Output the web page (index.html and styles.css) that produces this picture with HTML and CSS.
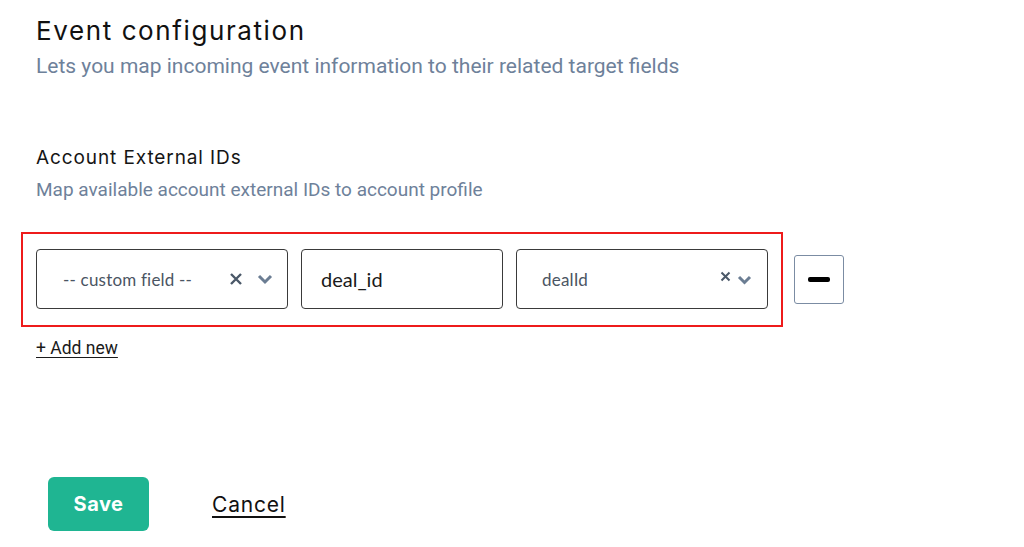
FILE: index.html
```html
<!DOCTYPE html>
<html>
<head>
<meta charset="utf-8">
<link rel="stylesheet" href="styles.css">
</head>
<body>
<div class="page">
  <h1 class="title">Event configuration</h1>
  <p class="subtitle">Lets you map incoming event information to their related target fields</p>

  <h2 class="section-title">Account External IDs</h2>
  <p class="section-sub">Map available account external IDs to account profile</p>

  <div class="mapping">
    <div class="highlight">
      <div class="field select">
        <span class="placeholder">-- custom field --</span>
        <span class="icons">
          <svg class="x" width="14" height="14" viewBox="0 0 14 14"><path d="M2 2L12 12M12 2L2 12" stroke="#4a5868" stroke-width="2.4" stroke-linecap="butt"/></svg>
          <svg class="chev" width="16" height="12" viewBox="0 0 16 12"><path d="M2 3L8 9L14 3" fill="none" stroke="#6b7d93" stroke-width="3"/></svg>
        </span>
      </div>
      <div class="field text">deal_id</div>
      <div class="field select narrow">
        <span class="placeholder">dealId</span>
        <span class="icons tight">
          <svg class="x small" width="11" height="11" viewBox="0 0 11 11"><path d="M1.5 1.5L9.5 9.5M9.5 1.5L1.5 9.5" stroke="#4a5868" stroke-width="2"/></svg>
          <svg class="chev" width="15" height="11" viewBox="0 0 15 11"><path d="M2 3L7.5 8.5L13 3" fill="none" stroke="#6b7d93" stroke-width="3"/></svg>
        </span>
      </div>
    </div>
    <button class="remove"><span class="bar"></span></button>
  </div>

  <a class="add-new" href="#">+ Add new</a>

  <div class="actions">
    <button class="save">Save</button>
    <a class="cancel" href="#">Cancel</a>
  </div>
</div>
</body>
</html>
```

FILE: styles.css
```css
html, body {
  margin: 0;
  padding: 0;
  background: #ffffff;
}
.page {
  padding: 14px 0 0 36px;
  font-family: "Inter", "Open Sans", sans-serif;
}
.title {
  margin: 0;
  font-family: "Inter", sans-serif;
  font-weight: 400;
  font-size: 26px;
  line-height: 34px;
  color: #111111;
  letter-spacing: 1.6px;
}
.subtitle {
  margin: 6px 0 0 0;
  font-family: "Roboto", sans-serif;
  font-size: 21px;
  line-height: 24px;
  color: #6e819a;
}
.section-title {
  margin: 68px 0 0 0;
  font-family: "Inter", sans-serif;
  font-weight: 400;
  font-size: 19px;
  line-height: 24px;
  color: #151515;
  letter-spacing: 0.9px;
}
.section-sub {
  margin: 9px 0 0 0;
  font-family: "Roboto", sans-serif;
  font-size: 19px;
  line-height: 22px;
  color: #6e819a;
}
.mapping {
  display: flex;
  align-items: center;
  margin: 31px 0 0 -15px;
}
.highlight {
  display: flex;
  gap: 13px;
  border: 2px solid #ee1b1b;
  padding: 15px 13px 16px 13px;
}
.field {
  box-sizing: border-box;
  height: 60px;
  border: 1.5px solid #3a3a3a;
  border-radius: 4px;
  display: flex;
  align-items: center;
  font-family: "Lato", sans-serif;
}
.select {
  width: 252px;
  padding: 0 14px 0 26px;
  justify-content: space-between;
}
.select.narrow {
  width: 252px;
  padding-left: 25px;
  padding-right: 15px;
}
.text {
  width: 202px;
  padding-left: 19px;
  font-size: 20px;
  color: #1a1a1a;
}
.placeholder {
  font-size: 17px;
  color: #4b5563;
  letter-spacing: 0.2px;
}
.icons {
  display: flex;
  align-items: center;
  gap: 14px;
}
.icons.tight {
  gap: 6px;
}
.x.small {
  margin-top: -6px;
}
.remove {
  margin-left: 11px;
  width: 50px;
  height: 49px;
  box-sizing: border-box;
  background: #ffffff;
  border: 1.5px solid #7b8ca3;
  border-radius: 3px;
  display: flex;
  align-items: center;
  justify-content: center;
  padding: 0;
}
.bar {
  display: block;
  width: 22px;
  height: 5px;
  border-radius: 2px;
  background: #000000;
}
.add-new {
  display: inline-block;
  margin-top: 11px;
  font-family: "Roboto", sans-serif;
  font-size: 17.5px;
  line-height: 20px;
  color: #1a1a1a;
  text-decoration: underline;
  text-underline-offset: 3px;
}
.actions {
  display: flex;
  align-items: center;
  gap: 63px;
  margin: 119px 0 0 12px;
}
.save {
  width: 101px;
  height: 54px;
  border: none;
  border-radius: 6px;
  background: #1fb592;
  color: #ffffff;
  font-family: "Inter", sans-serif;
  font-weight: 700;
  font-size: 20px;
  letter-spacing: 0.5px;
  padding: 0;
}
.cancel {
  font-family: "Inter", sans-serif;
  font-size: 21px;
  color: #111111;
  letter-spacing: 0.8px;
  text-decoration: underline;
  text-underline-offset: 4px;
}
```
